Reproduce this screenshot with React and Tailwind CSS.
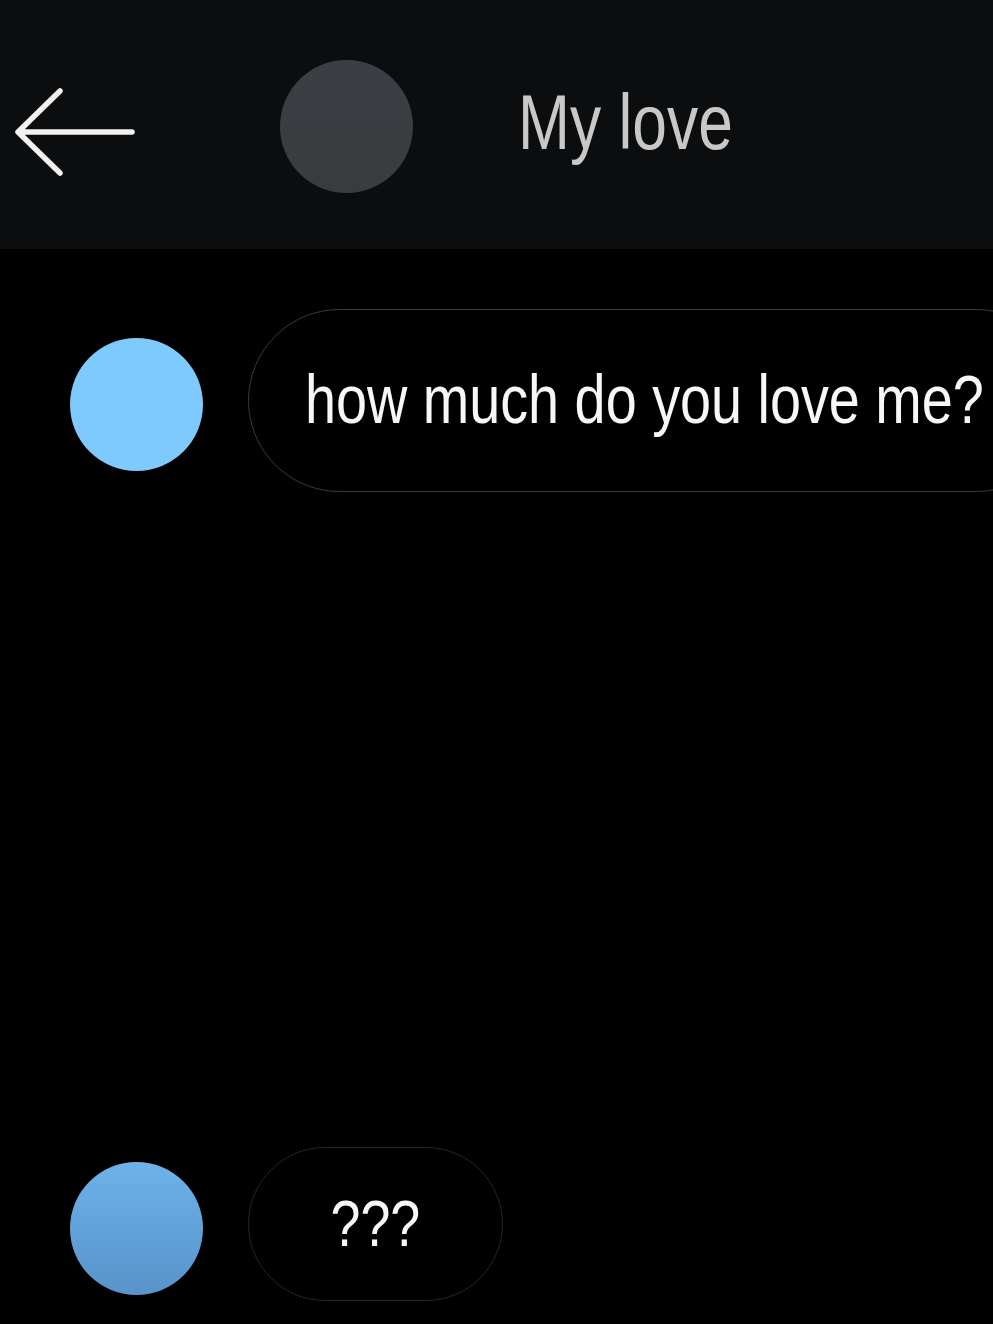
import React from 'react';

const font = { fontFamily: '"Liberation Sans", Arial, sans-serif' };

const BackArrow = () => (
  <svg width="124" height="92" viewBox="0 0 124 92" fill="none" className="shrink-0">
    <path
      d="M119 46 H5 M47 5 L5 46 L47 87"
      stroke="#f2f2f2"
      strokeWidth="5.5"
      strokeLinecap="round"
      strokeLinejoin="round"
    />
  </svg>
);

const Header = () => (
  <header className="flex h-[249px] items-center bg-[#0c0d0f] pl-[13px]">
    <div className="mt-[14px]">
      <BackArrow />
    </div>
    <div className="ml-[143px] mt-[4px] h-[133px] w-[133px] shrink-0 rounded-full bg-gradient-to-b from-[#3c3e44] to-[#3a3b3e]" />
    <div className="ml-[105px] -mt-[4px]">
      <span
        className="inline-block origin-left scale-x-[0.81] whitespace-nowrap text-[77px] leading-none text-[#c8c8c8]"
        style={font}
      >
        My love
      </span>
    </div>
  </header>
);

const Message = ({ avatarClass, bubbleClass, textClass, text, circleOffset }) => (
  <div className="flex items-start pl-[70px]">
    <div className={`h-[133px] w-[133px] shrink-0 rounded-full ${avatarClass} ${circleOffset}`} />
    <div className={`ml-[45px] flex shrink-0 items-center rounded-full ${bubbleClass}`}>
      <span
        className={`inline-block whitespace-nowrap leading-none text-[#f7f7f7] ${textClass}`}
        style={font}
      >
        {text}
      </span>
    </div>
  </div>
);

export default function App() {
  return (
    <div className="h-[1324px] w-[993px] overflow-hidden bg-black">
      <Header />
      <main className="flex h-[1075px] flex-col justify-between pb-[23px] pt-[60px]">
        <Message
          avatarClass="bg-[#7ecafc]"
          circleOffset="mt-[29px]"
          bubbleClass="h-[183px] w-[820px] border-[1.5px] border-[#3a3a3c] pl-[56px]"
          textClass="origin-left scale-x-[0.82] text-[68px] -mt-[3px]"
          text="how much do you love me?"
        />
        <Message
          avatarClass="bg-gradient-to-b from-[#6db2ea] to-[#5893c9]"
          circleOffset="mt-[15px]"
          bubbleClass="h-[154px] w-[255px] justify-center border-[1.5px] border-[#262628]"
          textClass="scale-x-[0.84] text-[64px]"
          text="???"
        />
      </main>
    </div>
  );
}
